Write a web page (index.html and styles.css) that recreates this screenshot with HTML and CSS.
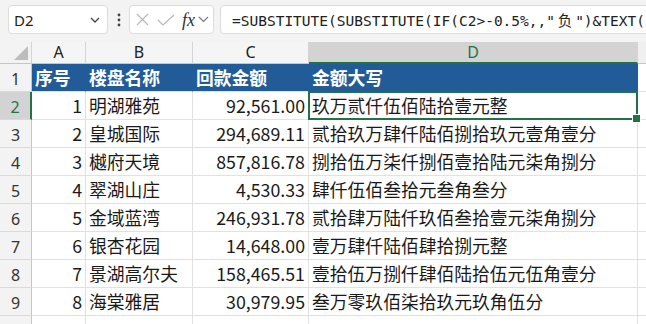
FILE: index.html
```html
<!DOCTYPE html>
<html lang="zh-CN">
<head>
  <meta charset="UTF-8" />
  <title>回款金额大写</title>
  <link rel="stylesheet" href="styles.css">
</head>
<body>
<div class="app">
  <div class="formula-bar">
    <div class="name-box">
      <span>D2</span>
      <svg width="12" height="8" viewBox="0 0 12 8"><path d="M2 2 L6 6 L10 2" fill="none" stroke="#444" stroke-width="1.3"/></svg>
    </div>
    <div class="dots">
      <svg width="4" height="14" viewBox="0 0 4 14"><circle cx="2" cy="2" r="1.4" fill="#444"/><circle cx="2" cy="7" r="1.4" fill="#444"/><circle cx="2" cy="12" r="1.4" fill="#444"/></svg>
    </div>
    <div class="fx-box">
      <svg class="ico-x" width="13" height="13" viewBox="0 0 13 13"><path d="M1 1 L12 12 M12 1 L1 12" stroke="#b8b8b8" stroke-width="1.2" fill="none"/></svg>
      <svg class="ico-ok" width="18" height="12" viewBox="0 0 18 12"><path d="M1 6 L6 11 L17 1" stroke="#b8b8b8" stroke-width="1.2" fill="none"/></svg>
      <span class="fx">fx</span>
      <svg width="11" height="7" viewBox="0 0 11 7"><path d="M1 1 L5.5 5.5 L10 1" fill="none" stroke="#777" stroke-width="1.1"/></svg>
    </div>
    <div class="formula-input">=SUBSTITUTE(SUBSTITUTE(IF(C2&gt;-0.5%,,"<span class="wide">负</span>")&amp;TEXT(INT(ABS(C2)+0.5%),"[dbnum2]G/通用格式元;;")</div>
  </div>

  <div class="sheet">
    <div class="corner"><svg width="16" height="16" viewBox="0 0 16 16"><polygon points="15,1 15,15 1,15" fill="#bdbdbd"/></svg></div>
    <div class="ch">A</div>
    <div class="ch">B</div>
    <div class="ch">C</div>
    <div class="ch sel">D</div>
    <div class="ch rest"></div>

    <div class="rh">1</div>
    <div class="c hd">序号</div>
    <div class="c hd">楼盘名称</div>
    <div class="c hd">回款金额</div>
    <div class="c hd">金额大写</div>
    <div class="c"></div>

    <div class="rh sel">2</div>
    <div class="c num">1</div>
    <div class="c">明湖雅苑</div>
    <div class="c num">92,561.00</div>
    <div class="c active">玖万贰仟伍佰陆拾壹元整</div>
    <div class="c"></div>

    <div class="rh">3</div>
    <div class="c num">2</div>
    <div class="c">皇城国际</div>
    <div class="c num">294,689.11</div>
    <div class="c">贰拾玖万肆仟陆佰捌拾玖元壹角壹分</div>
    <div class="c"></div>

    <div class="rh">4</div>
    <div class="c num">3</div>
    <div class="c">樾府天境</div>
    <div class="c num">857,816.78</div>
    <div class="c">捌拾伍万柒仟捌佰壹拾陆元柒角捌分</div>
    <div class="c"></div>

    <div class="rh">5</div>
    <div class="c num">4</div>
    <div class="c">翠湖山庄</div>
    <div class="c num">4,530.33</div>
    <div class="c">肆仟伍佰叁拾元叁角叁分</div>
    <div class="c"></div>

    <div class="rh">6</div>
    <div class="c num">5</div>
    <div class="c">金域蓝湾</div>
    <div class="c num">246,931.78</div>
    <div class="c">贰拾肆万陆仟玖佰叁拾壹元柒角捌分</div>
    <div class="c"></div>

    <div class="rh">7</div>
    <div class="c num">6</div>
    <div class="c">银杏花园</div>
    <div class="c num">14,648.00</div>
    <div class="c">壹万肆仟陆佰肆拾捌元整</div>
    <div class="c"></div>

    <div class="rh">8</div>
    <div class="c num">7</div>
    <div class="c">景湖高尔夫</div>
    <div class="c num">158,465.51</div>
    <div class="c">壹拾伍万捌仟肆佰陆拾伍元伍角壹分</div>
    <div class="c"></div>

    <div class="rh">9</div>
    <div class="c num">8</div>
    <div class="c">海棠雅居</div>
    <div class="c num">30,979.95</div>
    <div class="c">叁万零玖佰柒拾玖元玖角伍分</div>
    <div class="c"></div>

    <div class="rh"></div>
    <div class="c"></div>
    <div class="c"></div>
    <div class="c"></div>
    <div class="c"></div>
    <div class="c"></div>
  </div>
</div>
</body>
</html>
```

FILE: styles.css
```css
* {
  box-sizing: border-box;
}

body {
  margin: 0;
  background: #fff;
  color: #1a1a1a;
  font-family: "Noto Sans", "Noto Sans CJK SC", sans-serif;
  overflow: hidden;
}

.app {
  width: 646px;
  height: 324px;
  overflow: hidden;
}

/* formula bar */
.formula-bar {
  display: flex;
  align-items: flex-start;
  height: 42px;
  padding: 5px 0 0 8px;
  background: #f3f3f3;
  overflow: hidden;
}

.name-box {
  flex: none;
  width: 100px;
  height: 29px;
  display: flex;
  align-items: center;
  justify-content: space-between;
  padding: 0 6px 0 5px;
  background: #fff;
  border: 1px solid #dcdcdc;
  border-radius: 4px;
  font-size: 15px;
  color: #222;
}

.dots {
  flex: none;
  width: 21px;
  height: 29px;
  display: flex;
  align-items: center;
  justify-content: center;
  padding-left: 1px;
}

.fx-box {
  flex: none;
  width: 85px;
  height: 29px;
  display: flex;
  align-items: center;
  padding-left: 6px;
  background: #fff;
  border: 1px solid #dcdcdc;
  border-radius: 4px;
}

.ico-x {
  margin-right: 8px;
}

.ico-ok {
  margin-right: 7px;
}

.fx {
  font-family: "Liberation Serif", serif;
  font-style: italic;
  font-size: 18px;
  color: #333;
  margin-right: 3px;
  line-height: 1;
}

.formula-input {
  flex: none;
  width: 520px;
  height: 29px;
  margin-left: 6px;
  padding-left: 11px;
  background: #fff;
  border: 1px solid #dcdcdc;
  border-radius: 4px;
  font-family: "DejaVu Sans Mono", monospace;
  font-size: 14.5px;
  line-height: 27px;
  color: #222;
  white-space: nowrap;
  overflow: hidden;
}

.wide {
  display: inline-block;
  width: 2.5ch;
  text-align: center;
  font-family: "Noto Sans CJK SC", sans-serif;
}

/* sheet grid */
.sheet {
  display: grid;
  grid-template-columns: 32px 54px 107px 116px 329px 40px;
  grid-template-rows: 22px;
  grid-auto-rows: 28px;
}

.corner {
  background: #f3f3f3;
  border-right: 1px solid #d4d4d4;
  border-bottom: 1px solid #c6c6c6;
  display: flex;
  align-items: flex-end;
  justify-content: flex-end;
  padding: 0 2px 2px 0;
}

.ch {
  background: #f5f5f5;
  border-right: 1px solid #d4d4d4;
  border-bottom: 1px solid #c6c6c6;
  text-align: center;
  font-size: 16px;
  line-height: 21px;
  color: #222;
}

.ch.sel {
  background: #d3d3d3;
  color: #217346;
  border-bottom: 2px solid #217346;
}

.ch.rest {
  background: #f0f0f0;
}

.rh {
  background: #f3f3f3;
  border-right: 1px solid #c6c6c6;
  border-bottom: 1px solid #dadada;
  text-align: center;
  font-size: 16px;
  line-height: 27px;
  padding-top: 2px;
  color: #333;
}

.rh.sel {
  background: #d3d3d3;
  color: #217346;
  border-right: 2px solid #217346;
}

.c {
  border-right: 1px solid #e1e1e1;
  border-bottom: 1px solid #e1e1e1;
  padding: 0 3px;
  font-family: "Noto Sans CJK SC", sans-serif;
  font-size: 17.8px;
  line-height: 27px;
  white-space: nowrap;
  color: #1a1a1a;
}

.c.num {
  text-align: right;
  padding-right: 3px;
}

.c.hd {
  background: #215c98;
  border-right-color: #215c98;
  color: #fff;
  font-weight: bold;
}

.c.active {
  position: relative;
}

.c.active::after {
  content: "";
  position: absolute;
  left: -1px;
  top: -1px;
  right: -1px;
  bottom: -1px;
  border: 2px solid #217346;
}

.c.active::before {
  content: "";
  position: absolute;
  right: -4px;
  bottom: -4px;
  width: 7px;
  height: 7px;
  background: #217346;
  border: 1px solid #fff;
  z-index: 2;
}
```
